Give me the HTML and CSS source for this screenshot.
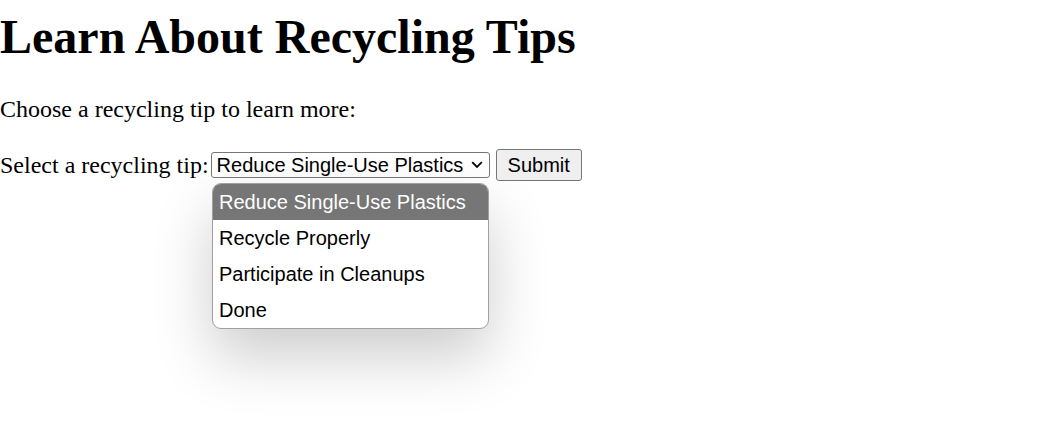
FILE: index.html
```html
<!DOCTYPE html>
<html lang="en">
<head>
<meta charset="utf-8">
<title>Learn About Recycling Tips</title>
<link rel="stylesheet" href="styles.css">
</head>
<body>
<h1 class="title">Learn About Recycling Tips</h1>
<p class="intro">Choose a recycling tip to learn more:</p>
<div class="tip-form">
  <span class="tip-label">Select a recycling tip:</span>
  <div class="select"><span class="select-text">Reduce Single-Use Plastics</span><svg class="chev" viewBox="0 0 12 8" width="12" height="8"><path d="M1.2 1.2 L6 6 L10.8 1.2" fill="none" stroke="#000" stroke-width="1.8"/></svg></div>
  <div class="submit">Submit</div>
</div>
<div class="tip-list">
  <div class="opt selected">Reduce Single-Use Plastics</div>
  <div class="opt">Recycle Properly</div>
  <div class="opt">Participate in Cleanups</div>
  <div class="opt">Done</div>
</div>
</body>
</html>
```
FILE: styles.css
```css
html, body {
  margin: 0;
  padding: 0;
  background: #fff;
}
html {
  height: 100%;
}
body {
  min-height: 100%;
  font-family: "Liberation Serif", "Times New Roman", serif;
  font-size: 24px;
  color: #000;
}
.title {
  font-size: 48px;
  font-weight: bold;
  margin: 0;
  padding-top: 9px;
  line-height: 55px;
}
.intro {
  margin: 31px 0 0 0;
  line-height: 28px;
}
.tip-form {
  display: flex;
  align-items: center;
  margin-top: 26px;
  height: 32px;
}
.tip-label {
  margin-right: 2px;
  line-height: 28px;
}
.select {
  display: flex;
  align-items: center;
  justify-content: space-between;
  box-sizing: border-box;
  height: 26px;
  width: 279px;
  border: 1px solid #767676;
  border-radius: 3px;
  padding: 0 6px 0 5px;
  font-family: "Liberation Sans", Arial, sans-serif;
  font-size: 20px;
  line-height: 24px;
}
.chev {
  display: block;
}
.tip-list {
  margin: 2px 0 0 212px;
  width: 277px;
  box-sizing: border-box;
  background: #fff;
  border: 1px solid #a0a0a0;
  border-radius: 9px;
  overflow: hidden;
  box-shadow: 0 28px 60px rgba(0, 0, 0, 0.2);
  font-family: "Liberation Sans", Arial, sans-serif;
  font-size: 20px;
}
.opt {
  height: 36px;
  line-height: 36px;
  padding-left: 6px;
  white-space: nowrap;
}
.opt.selected {
  background: #767676;
  color: #fff;
}
.submit {
  margin-left: 6px;
  height: 32px;
  line-height: 30px;
  box-sizing: border-box;
  padding: 0 11px;
  border: 1px solid #767676;
  border-radius: 3px;
  background: #efefef;
  font-family: "Liberation Sans", Arial, sans-serif;
  font-size: 20px;
  color: #000;
}
```
